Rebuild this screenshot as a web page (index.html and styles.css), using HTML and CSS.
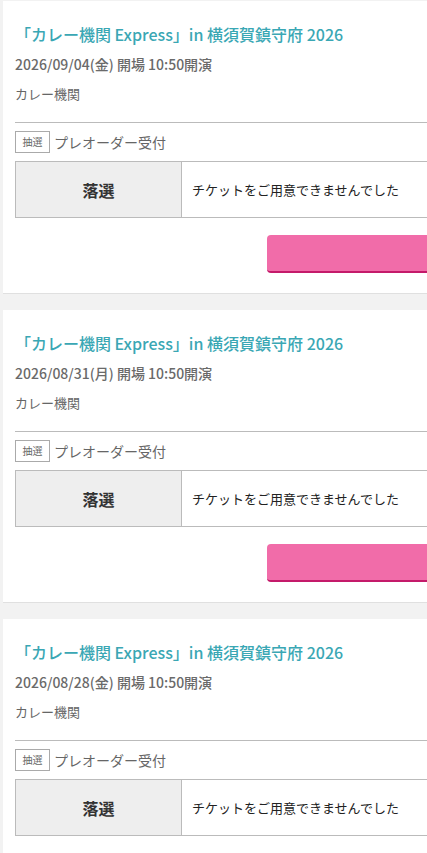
FILE: index.html
```html
<!DOCTYPE html>
<html lang="ja">
<head>
<meta charset="utf-8">
<link rel="stylesheet" href="styles.css">
</head>
<body>
<div class="list">
  <section class="card">
    <h2 class="title">「カレー機関 Express」in 横須賀鎮守府 2026</h2>
    <p class="date">2026/09/04(金) 開場 10:50開演</p>
    <p class="artist">カレー機関</p>
    <div class="rule"></div>
    <div class="kind"><span class="tag">抽選</span><span class="kind-name">プレオーダー受付</span></div>
    <div class="result"><div class="status">落選</div><div class="msg">チケットをご用意できませんでした</div></div>
    <div class="actions"><span class="btn"></span></div>
  </section>
  <section class="card">
    <h2 class="title">「カレー機関 Express」in 横須賀鎮守府 2026</h2>
    <p class="date">2026/08/31(月) 開場 10:50開演</p>
    <p class="artist">カレー機関</p>
    <div class="rule"></div>
    <div class="kind"><span class="tag">抽選</span><span class="kind-name">プレオーダー受付</span></div>
    <div class="result"><div class="status">落選</div><div class="msg">チケットをご用意できませんでした</div></div>
    <div class="actions"><span class="btn"></span></div>
  </section>
  <section class="card">
    <h2 class="title">「カレー機関 Express」in 横須賀鎮守府 2026</h2>
    <p class="date">2026/08/28(金) 開場 10:50開演</p>
    <p class="artist">カレー機関</p>
    <div class="rule"></div>
    <div class="kind"><span class="tag">抽選</span><span class="kind-name">プレオーダー受付</span></div>
    <div class="result"><div class="status">落選</div><div class="msg">チケットをご用意できませんでした</div></div>
    <div class="actions"><span class="btn"></span></div>
  </section>
</div>
</body>
</html>
```
FILE: styles.css
```css
html, body {
  margin: 0;
  overflow: hidden;
}
body {
  background: #f2f2f2;
  font-family: "Noto Sans CJK JP", "Noto Sans", sans-serif;
  padding: 1px 0 0 3px;
}
.list {
  width: 560px;
  display: flex;
  flex-direction: column;
  gap: 16px;
}
.card {
  background: #fff;
  border-bottom: 1px solid #e0e0e0;
  padding: 21px 12px 20px 12px;
}
.title {
  margin: 0;
  font-size: 16px;
  font-weight: 500;
  line-height: 24px;
  color: #3aa7b4;
}
.date {
  margin: 8px 0 0;
  font-size: 14px;
  font-weight: 500;
  line-height: 20px;
  color: #6a6a6a;
}
.artist {
  margin: 10px 0 0;
  font-size: 13px;
  line-height: 20px;
  color: #666;
}
.rule {
  margin-top: 18px;
  border-top: 1px solid #bbb;
}
.kind {
  margin-top: 7px;
  height: 23px;
  display: flex;
  align-items: center;
  gap: 4px;
}
.tag {
  box-sizing: border-box;
  width: 35px;
  height: 22px;
  border: 1px solid #aaa;
  font-size: 10px;
  color: #666;
  display: flex;
  align-items: center;
  justify-content: center;
}
.kind-name {
  font-size: 14px;
  color: #666;
}
.result {
  margin-top: 8px;
  display: flex;
  height: 57px;
  box-sizing: border-box;
  border: 1px solid #bbb;
}
.status {
  width: 166px;
  box-sizing: border-box;
  background: #eee;
  border-right: 1px solid #bbb;
  display: flex;
  align-items: center;
  justify-content: center;
  font-size: 16px;
  font-weight: 700;
  color: #333;
}
.msg {
  flex: 1;
  display: flex;
  align-items: center;
  padding-left: 10px;
  font-size: 13px;
  color: #222;
}
.actions {
  margin-top: 17px;
  display: flex;
  padding-left: 252px;
}
.btn {
  display: block;
  width: 290px;
  height: 36px;
  background: #f16ca9;
  border-bottom: 2px solid #c41a6a;
  border-radius: 4px;
}
```
